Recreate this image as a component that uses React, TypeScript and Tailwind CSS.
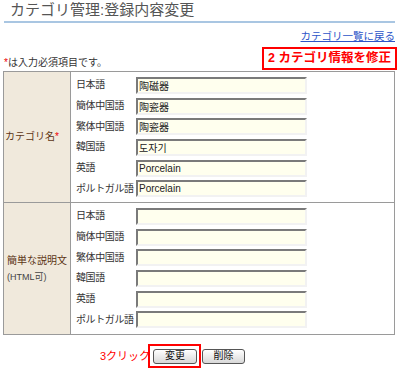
import React from "react";

const font = "font-['Liberation_Sans','Noto_Sans_CJK_JP','Noto_Sans_CJK_KR',sans-serif]";

function Field({ label, value }: { label: string; value?: string }) {
  return (
    <div className="flex h-[20.7px] items-center">
      <div className="w-[65px] pl-[5px] text-[10px] leading-[12px] tracking-[-0.4px] text-[#333] whitespace-nowrap">{label}</div>
      <input
        readOnly
        defaultValue={value ?? ""}
        className={`h-[17px] w-[171px] bg-[#ffffee] border-2 border-t-[#7a7a7a] border-l-[#7a7a7a] border-b-[#f2f2f2] border-r-[#f2f2f2] pl-[1px] text-[10px] leading-[12px] text-[#222] outline-none ${font}`}
      />
    </div>
  );
}

const langs = ["日本語", "簡体中国語", "繁体中国語", "韓国語", "英語", "ポルトガル語"];

export default function App() {
  const names = ["陶磁器", "陶瓷器", "陶瓷器", "도자기", "Porcelain", "Porcelain"];
  return (
    <div className={`w-[400px] h-[369px] bg-white ${font}`}>
      <div className="h-[21px] pl-[10px] text-[15px] leading-[20px] text-[#555] whitespace-nowrap">
        カテゴリ管理:登録内容変更
      </div>
      <div className="ml-[4px] w-[391px] h-[2px] bg-[#a9c6e2]" />
      <div className="mt-[5px] h-[16px] flex justify-end pr-[5px]">
        <span className="text-[10.5px] leading-[16px] text-[#2d55c8] underline whitespace-nowrap">
          カテゴリ一覧に戻る
        </span>
      </div>
      <div className="h-[27px] flex justify-between items-end pl-[4px] pr-[3px]">
        <div className="mb-[2px] text-[10px] leading-[12px] text-[#333] whitespace-nowrap">
          <span className="text-[#e00]">*</span>は入力必須項目です。
        </div>
        <div className="mb-[1px] h-[23px] w-[135px] border-2 border-[#ff0000] flex items-center justify-center text-[12.5px] font-bold text-[#ff0000] whitespace-nowrap">
          2 カテゴリ情報を修正
        </div>
      </div>
      <div className="ml-[3px] w-[392px] border border-[#9a9a9a]">
        <div className="flex h-[131px] border-b border-[#9a9a9a]">
          <div className="w-[67px] bg-[#f0e9dc] border-r border-[#9a9a9a] flex items-center pl-[1px]">
            <span className="text-[10px] leading-[14px] text-[#5c3515] whitespace-nowrap">
              カテゴリ名<span className="text-[#e00]">*</span>
            </span>
          </div>
          <div className="pt-[3px]">
            {langs.map((l, i) => (
              <Field key={l} label={l} value={names[i]} />
            ))}
          </div>
        </div>
        <div className="flex h-[131px]">
          <div className="w-[67px] bg-[#f0e9dc] border-r border-[#9a9a9a] flex flex-col justify-center pl-[3px]">
            <span className="text-[10px] leading-[16px] text-[#5c3515] whitespace-nowrap">簡単な説明文</span>
            <span className="text-[9px] leading-[16px] text-[#444] whitespace-nowrap">(HTML可)</span>
          </div>
          <div className="pt-[3px]">
            {langs.map((l) => (
              <Field key={l} label={l} />
            ))}
          </div>
        </div>
      </div>
      <div className="mt-[9px] h-[24px] flex items-center pl-[100px]">
        <span className="text-[11px] leading-[14px] text-[#ff0000] whitespace-nowrap w-[48px]">3クリック</span>
        <div className="h-[24px] w-[53px] border-2 border-[#ff0000] flex items-center pl-[3px]">
          <button className="h-[15px] w-[44px] rounded-[3px] border border-[#555] bg-gradient-to-b from-white to-[#d8d8d8] text-[10px] leading-[12px] text-[#111]">
            変更
          </button>
        </div>
        <button className="ml-[1px] h-[15px] w-[43px] rounded-[3px] border border-[#555] bg-gradient-to-b from-white to-[#d8d8d8] text-[10px] leading-[12px] text-[#111]">
          削除
        </button>
      </div>
    </div>
  );
}
